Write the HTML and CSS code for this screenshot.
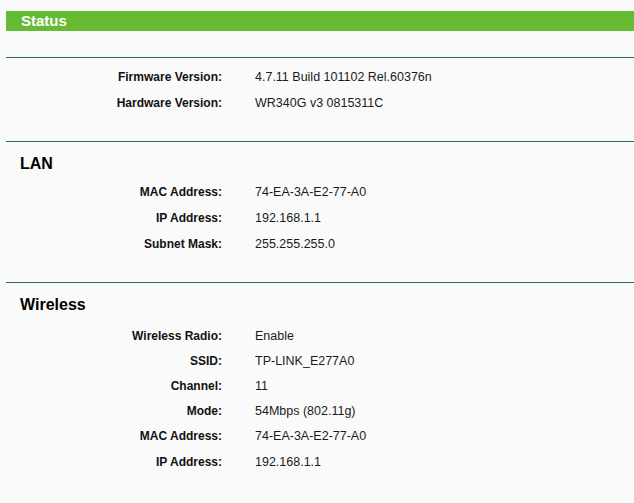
FILE: index.html
```html
<!DOCTYPE html>
<html>
<head>
<meta charset="utf-8">
<link rel="stylesheet" href="styles.css">
</head>
<body>
<div class="page">
  <div class="title-bar">Status</div>
  <div class="section first">
    <div class="row"><span class="label">Firmware Version:</span><span class="value">4.7.11 Build 101102 Rel.60376n</span></div>
    <div class="row"><span class="label">Hardware Version:</span><span class="value">WR340G v3 0815311C</span></div>
  </div>
  <div class="section">
    <div class="heading">LAN</div>
    <div class="row"><span class="label">MAC Address:</span><span class="value">74-EA-3A-E2-77-A0</span></div>
    <div class="row"><span class="label">IP Address:</span><span class="value">192.168.1.1</span></div>
    <div class="row"><span class="label">Subnet Mask:</span><span class="value">255.255.255.0</span></div>
  </div>
  <div class="section wireless">
    <div class="heading">Wireless</div>
    <div class="row"><span class="label">Wireless Radio:</span><span class="value">Enable</span></div>
    <div class="row"><span class="label">SSID:</span><span class="value">TP-LINK_E277A0</span></div>
    <div class="row"><span class="label">Channel:</span><span class="value">11</span></div>
    <div class="row"><span class="label">Mode:</span><span class="value">54Mbps (802.11g)</span></div>
    <div class="row"><span class="label">MAC Address:</span><span class="value">74-EA-3A-E2-77-A0</span></div>
    <div class="row"><span class="label">IP Address:</span><span class="value">192.168.1.1</span></div>
  </div>
</div>
</body>
</html>
```
FILE: styles.css
```css
html, body {
  margin: 0;
  padding: 0;
  background: #fafafa;
  font-family: "Liberation Sans", Arial, sans-serif;
}
.page {
  padding: 11px 0 0 6px;
}
.title-bar {
  height: 20px;
  line-height: 20px;
  background: #66bb33;
  color: #fff;
  font-size: 15px;
  font-weight: bold;
  padding-left: 15px;
  margin-bottom: 26px;
}
.section {
  border-top: 1px solid #286e48;
  padding-bottom: 26px;
}
.section.first {
  padding-top: 5px;
  padding-bottom: 26px;
}
.heading {
  height: 36px;
  line-height: 44px;
  font-size: 16px;
  font-weight: bold;
  color: #000;
  padding-left: 14px;
}
.wireless .heading {
  height: 39px;
}
.row {
  display: flex;
  box-sizing: border-box;
  height: 26px;
  padding-top: 2px;
  align-items: center;
  font-size: 12px;
  color: #000;
}
.wireless .row {
  height: 25.2px;
}
.label {
  width: 216px;
  text-align: right;
  font-weight: bold;
  color: #111;
}
.value {
  margin-left: 33px;
  font-size: 12.5px;
  color: #1a1a1a;
}
```
